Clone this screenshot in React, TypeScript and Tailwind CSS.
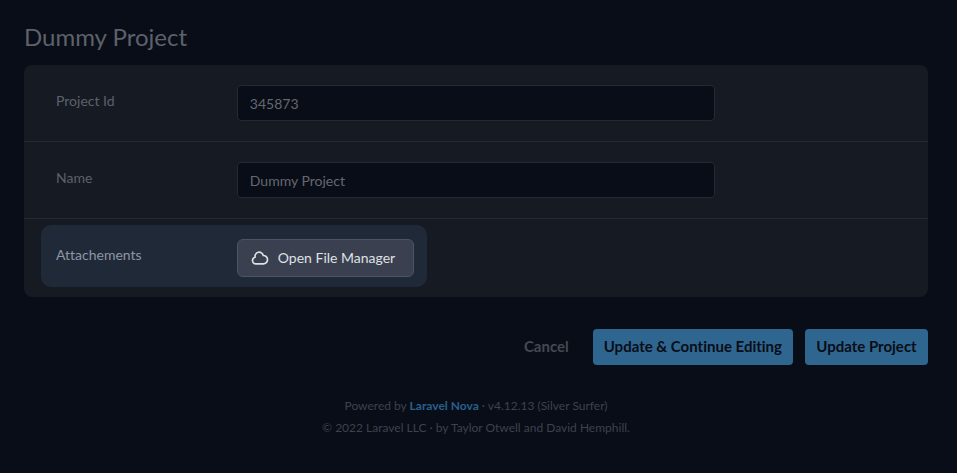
import type { ReactNode } from "react";

function FieldRow({ id, label, children }: { id: string; label: string; children: ReactNode }) {
  return (
    <div className="grid grid-cols-[20%_60%] border-b border-[#242933]">
      <label htmlFor={id} className="px-8 pt-[26px] leading-5">
        {label}
      </label>
      <div className="px-8 py-5">{children}</div>
    </div>
  );
}

function TextInput({ id, value }: { id: string; value: string }) {
  return (
    <input
      id={id}
      type="text"
      defaultValue={value}
      className="block h-9 w-full rounded border border-[#242933] bg-[#090d17] px-3 text-[#656871] outline-none"
    />
  );
}

function CloudIcon() {
  return (
    <svg
      viewBox="0 0 24 24"
      className="size-5"
      fill="none"
      stroke="currentColor"
      strokeWidth="2"
      strokeLinecap="round"
      strokeLinejoin="round"
      aria-hidden="true"
    >
      <path d="M3 15a4 4 0 0 0 4 4h9a5 5 0 1 0-.1-9.999 5 5 0 1 0-9.78 2.096A4.001 4.001 0 0 0 3 15z" />
    </svg>
  );
}

export default function App() {
  return (
    <div className="min-h-screen bg-[#090d17] pr-[29px] pb-8 pl-6 font-['Lato','Liberation_Sans',sans-serif] text-sm text-[#5d616a] [font-variant-ligatures:none]">
      <h1 className="pt-[21px] text-2xl leading-8">Dummy Project</h1>
      <form onSubmit={(event) => event.preventDefault()}>
        <div className="mt-3 overflow-hidden rounded-lg bg-[#161a23]">
          <FieldRow id="project-id" label="Project Id">
            <TextInput id="project-id" value="345873" />
          </FieldRow>
          <FieldRow id="name" label="Name">
            <TextInput id="name" value="Dummy Project" />
          </FieldRow>
          <div className="grid grid-cols-[20%_60%] pt-1.5 pb-2.5">
            <label
              htmlFor="attachments"
              className="ml-[17px] rounded-l-[10px] bg-[#202938] pt-5 pl-[15px] leading-5 text-[#8d96a5]"
            >
              Attachements
            </label>
            <div className="w-fit rounded-r-[10px] bg-[#202938] pt-3.5 pr-[13px] pb-2.5 pl-8">
              <button
                id="attachments"
                type="button"
                className="flex h-[38px] items-center gap-2 rounded-md border border-[#4b5563] bg-[#3b4050] pr-[18px] pl-3 text-[#dfe1e5]"
              >
                <CloudIcon />
                Open File Manager
              </button>
            </div>
          </div>
        </div>
        <div className="mt-8 flex items-center justify-end gap-3 text-[15px] font-bold text-[#090d17]">
          <button type="button" className="h-9 px-3 text-[#444852]">
            Cancel
          </button>
          <button type="submit" className="h-9 rounded bg-[#2f668f] px-[11px]">
            Update &amp; Continue Editing
          </button>
          <button type="submit" className="h-9 min-w-[123px] rounded bg-[#2f668f] px-[11px]">
            Update Project
          </button>
        </div>
      </form>
      <footer className="mt-[30px] text-center text-xs leading-[22px] text-[#3d424d]">
        <p>
          Powered by{" "}
          <a href="#nova" className="font-bold text-[#28608a]">
            Laravel Nova
          </a>{" "}
          · v4.12.13 (Silver Surfer)
        </p>
        <p>© 2022 Laravel LLC · by Taylor Otwell and David Hemphill.</p>
      </footer>
    </div>
  );
}
